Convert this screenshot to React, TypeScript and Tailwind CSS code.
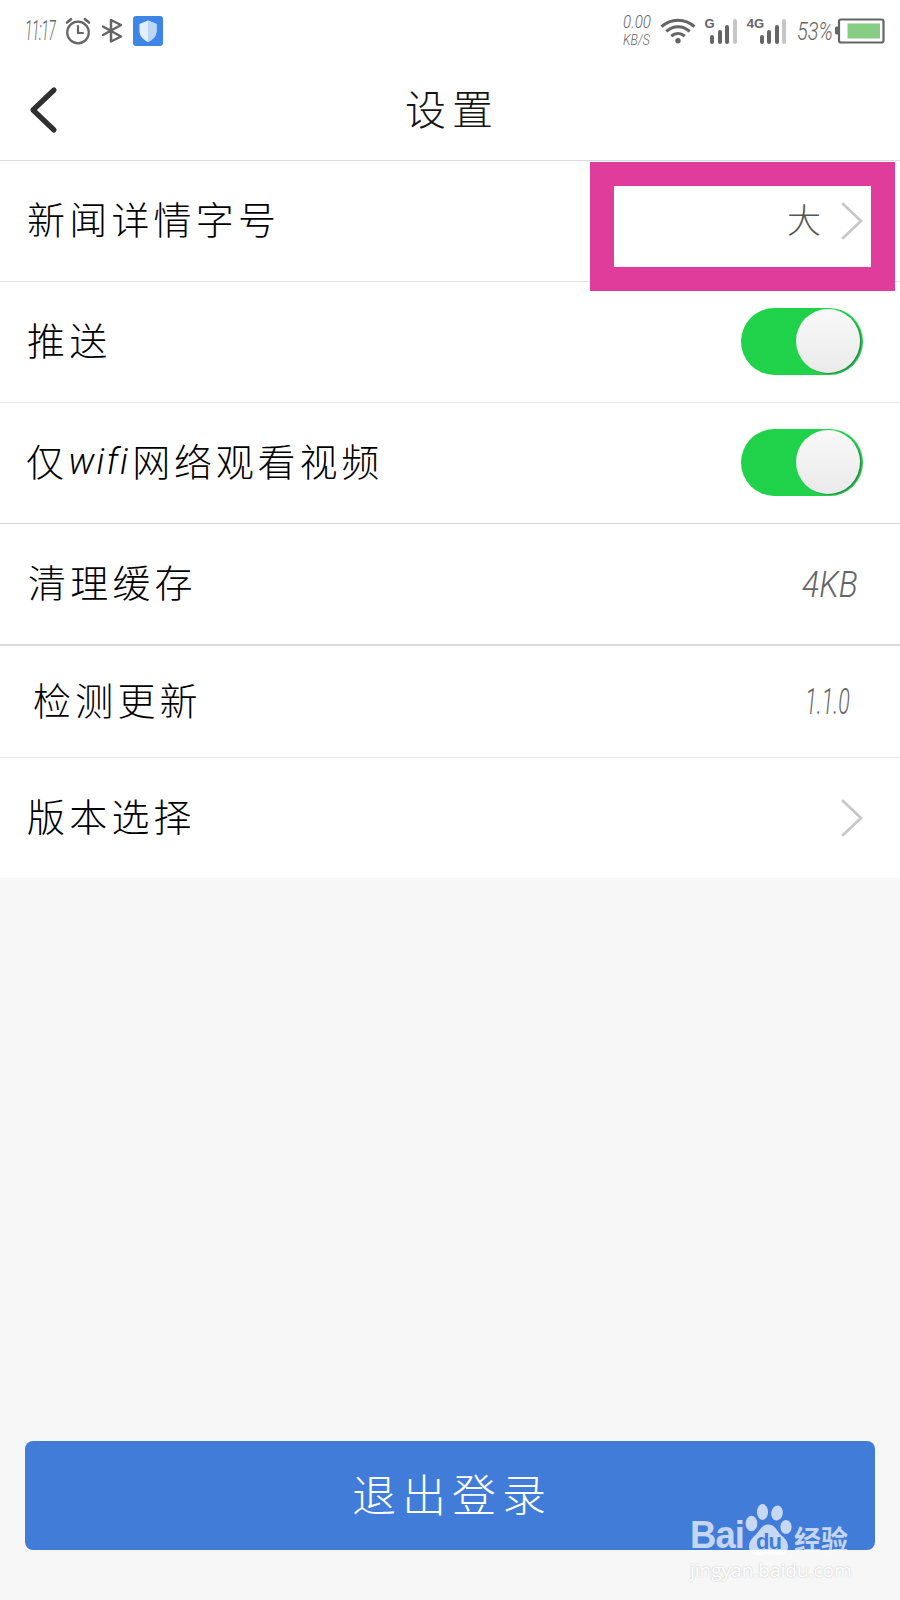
import type { ReactNode } from "react";

const LATIN = "font-['Roboto','Noto_Sans_CJK_SC',sans-serif] font-light italic";

function AlarmIcon() {
  return (
    <svg width="26" height="28" viewBox="0 0 26 28" fill="none" stroke="#656565" strokeWidth="2.2" strokeLinecap="round">
      <circle cx="13" cy="15.5" r="10.8" />
      <path d="M13 9v7h5" />
      <path d="M2 5.5 6 2.2M24 5.5 20 2.2" strokeWidth="2.6" />
    </svg>
  );
}

function BluetoothIcon() {
  return (
    <svg width="22" height="26" viewBox="0 0 22 26" fill="none" stroke="#656565" strokeWidth="2.5" strokeLinejoin="round" strokeLinecap="round">
      <path d="M2 8.500 20 18.500 10 23.500V2l10 5L2 17" />
    </svg>
  );
}

function ShieldIcon() {
  return (
    <svg width="30" height="30" viewBox="0 0 30 30">
      <rect width="30" height="30" rx="3" fill="#3e86e6" />
      <path d="M15 4.500 6.500 8v7c0 5 3.500 8.500 8.500 11 5-2.500 8.500-6 8.500-11V8Z" fill="#e3effc" />
      <path d="M15 4.500V26c5-2.500 8.500-6 8.500-11V8Z" fill="#bdd6f6" />
    </svg>
  );
}

function WifiIcon() {
  return (
    <svg width="36" height="27" viewBox="0 0 36 27" fill="none" stroke="#656565" strokeWidth="3.1">
      <path d="M1.500 8.700c9.500-8.700 23.500-8.700 33 0" />
      <path d="M6.300 13.400c7-6.300 16.400-6.300 23.400 0" />
      <path d="M11.200 18.200c4.200-3.700 9.400-3.700 13.600 0" />
      <circle cx="18" cy="22.800" r="2.700" fill="#656565" stroke="none" />
    </svg>
  );
}

function Signal({ label, className }: { label: string; className: string }) {
  return (
    <div className={`relative flex h-[26px] items-end gap-[3.5px] ${className}`}>
      <span className="absolute right-[22px] top-0 font-['Liberation_Sans',sans-serif] text-[13px] font-bold not-italic leading-[12px] text-[#656565]">
        {label}
      </span>
      <i className="h-[9px] w-1 rounded-sm bg-[#656565]" />
      <i className="h-[14px] w-1 rounded-sm bg-[#656565]" />
      <i className="h-[19px] w-1 rounded-sm bg-[#656565]" />
      <i className="h-[25px] w-1 rounded-sm bg-[#c6c6c6]" />
    </div>
  );
}

function Battery() {
  return (
    <svg width="50" height="26" viewBox="0 0 50 26">
      <rect x="0" y="8.500" width="4" height="8" rx="1.500" fill="#656565" />
      <rect x="4" y="1.500" width="44.500" height="23" rx="2" fill="white" stroke="#656565" strokeWidth="2.200" />
      <rect x="12.500" y="5.500" width="32.500" height="15" fill="#87cd83" />
    </svg>
  );
}

function StatusBar() {
  return (
    <div className={`flex h-[62px] items-center pl-[25px] pr-[15px] text-[#656565] ${LATIN}`}>
      <span className="w-[40px]">
        <span className="block w-16 origin-left scale-x-[.5] text-[27px] leading-none tracking-[-0.5px]">11:17</span>
      </span>
      <AlarmIcon />
      <span className="ml-[10px]"><BluetoothIcon /></span>
      <span className="ml-[10px]"><ShieldIcon /></span>
      <div className="ml-auto mr-[9px] w-7 whitespace-nowrap pb-[2px]">
        <div className="w-10 origin-left scale-x-[.84] text-[18px] leading-[20px]">0.00</div>
        <div className="w-10 origin-left scale-x-[.85] text-[14.500px] leading-[17px]">KB/S</div>
      </div>
      <WifiIcon />
      <Signal label="G" className="ml-[14px]" />
      <Signal label="4G" className="ml-[23px]" />
      <span className="ml-[11px] w-[38px]">
        <span className="block w-14 origin-left scale-x-[.8] text-[25px] leading-none">53%</span>
      </span>
      <Battery />
    </div>
  );
}

function Chevron() {
  return (
    <svg width="22" height="38" viewBox="0 0 22 38" fill="none" stroke="#c8c8c8" strokeWidth="2.8" strokeLinecap="round">
      <path d="M2 2 20 19 2 36" />
    </svg>
  );
}

function Toggle() {
  return (
    <div className="mb-0.5 flex h-[67px] w-[122px] items-center justify-end rounded-full bg-[#20d24a] pr-[3px]">
      <div className="size-[64px] rounded-full bg-linear-to-b from-[#f9f9f9] to-[#eaeaea] shadow-[1.5px_1px_1px_#2d8a48]" />
    </div>
  );
}

function Row({ label, className, children }: { label: ReactNode; className: string; children?: ReactNode }) {
  return (
    <div className={`flex items-center justify-between bg-white pr-[37px] text-black ${className}`}>
      <span className="flex items-center whitespace-nowrap pb-[6px] text-[38px] font-light leading-none tracking-[4.2px]">
        {label}
      </span>
      {children}
    </div>
  );
}

export default function App() {
  return (
    <main className="relative flex h-[1600px] w-[900px] flex-col overflow-hidden bg-[#f7f7f7] font-['Noto_Sans_CJK_SC',sans-serif]">
      <header className="h-[161px] border-b border-[#dcdcdc] bg-white">
        <StatusBar />
        <div className="grid h-[96px] grid-cols-[100px_1fr_100px] items-center">
          <svg className="ml-[28px]" width="30" height="48" viewBox="0 0 30 48" fill="none" stroke="#303030" strokeWidth="5.200" strokeLinecap="round" strokeLinejoin="round">
            <path d="M26 4 5 24 26 44" />
          </svg>
          <h1 className="pb-[5px] pl-1 text-center text-[41px] font-light leading-none tracking-[6px] text-[#151515]">设置</h1>
        </div>
      </header>

      <section>
        <Row label="新闻详情字号" className="relative h-[121px] border-b border-[#e4e4e4] pl-[27px]">
          <div className="flex items-center gap-[20px]">
            <span className="pb-1 text-[34px] font-light leading-none text-[#555]">大</span>
            <Chevron />
          </div>
          {/* highlight frame around the value */}
          <div className="absolute left-[590px] top-px z-10 h-[129px] w-[305px] border-[24px] border-[#df3c9b]" />
        </Row>
        <Row label="推送" className="h-[121px] border-b border-[#e4e4e4] pl-[27px]">
          <Toggle />
        </Row>
        <Row
          label={
            <>
              仅
              <span className="w-[64px] pt-1">
                <span className={`block text-[36px] leading-none tracking-[2px] ${LATIN}`}>wifi</span>
              </span>
              <span className="tracking-[3.8px]">网络观看视频</span>
            </>
          }
          className="h-[121px] border-b border-[#d8d8d8] pl-[26px]"
        >
          <Toggle />
        </Row>
        <Row label="清理缓存" className="h-[122px] border-b-2 border-[#dadada] pl-[28px]">
          <span className={`mr-[5px] origin-right scale-x-[.86] text-[37px] leading-none text-[#656565] ${LATIN}`}>4KB</span>
        </Row>
        <Row label="检测更新" className="h-[112px] border-b border-[#e4e4e4] pl-[33px]">
          <span className={`mr-[13px] origin-right scale-x-[.58] text-[37px] leading-none text-[#656565] ${LATIN}`}>1.1.0</span>
        </Row>
        <Row label="版本选择" className="h-[120px] pl-[27px]">
          <Chevron />
        </Row>
      </section>

      <button className="mx-[25px] mb-[50px] mt-auto h-[109px] shrink-0 rounded-lg bg-[#427cd9] pb-[5px] pl-1 text-[44px] font-light leading-none tracking-[6px] text-white">
        退出登录
      </button>

      {/* site watermark */}
      <div className="absolute left-[690px] top-[1503px] text-white/70">
        <div className="flex h-[53px] items-end">
          <span className="w-[54px]">
            <span className="block origin-left scale-x-[.96] font-['Liberation_Sans',sans-serif] text-[38px] font-bold leading-[42px] tracking-[-1px]">Bai</span>
          </span>
          <div className="relative h-[53px] w-[48px]">
            <svg width="48" height="53" viewBox="0 0 48 53" fill="currentColor">
              <ellipse cx="7.500" cy="20.500" rx="5.800" ry="7.800" />
              <ellipse cx="18.500" cy="9" rx="5.600" ry="7.900" />
              <ellipse cx="33" cy="10" rx="5.800" ry="7.500" transform="rotate(8 33 10)" />
              <ellipse cx="42" cy="24" rx="5.600" ry="7" />
              <path d="M24 21.500c-6 0-8 6-12 10-4 3.500-7 7-7 12 0 6 4 8.500 9 8.500 4 0 7-1 10.500-1s6 1 10.500 1c5 0 9-3 9-8.500 0-5-3-8-7-11.500-4-4-6-10.500-13-10.500Z" />
            </svg>
            <span className="absolute left-[12px] top-[27px] font-['Liberation_Sans',sans-serif] text-[22px] font-bold leading-[24px] tracking-[-1px] text-[#427cd9]">du</span>
          </div>
          <span className="mb-[3px] ml-0.5 text-[27px] font-bold leading-[28px]">经验</span>
        </div>
        <div className="w-[170px] font-['Open_Sans',sans-serif] text-[19px] leading-[28px] text-white [text-shadow:0_0_2px_#bdbdbd]">
          jingyan.baidu.com
        </div>
      </div>
    </main>
  );
}
